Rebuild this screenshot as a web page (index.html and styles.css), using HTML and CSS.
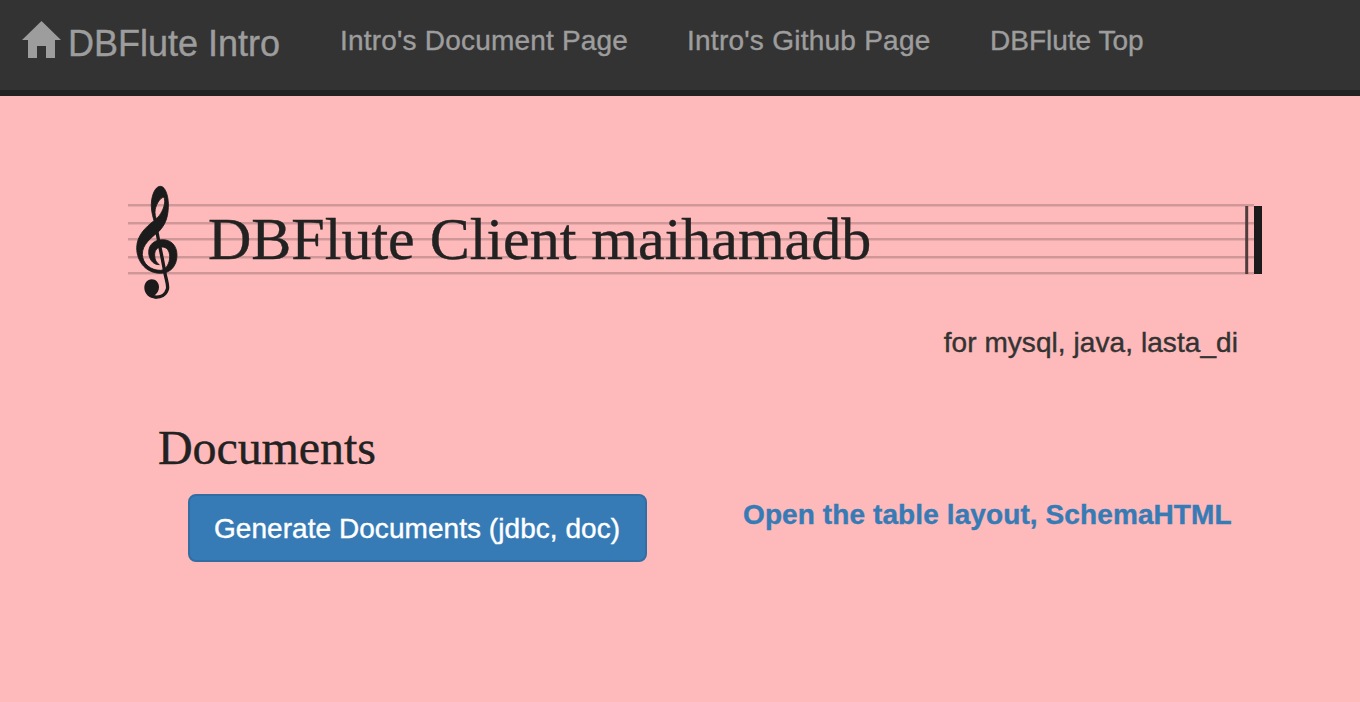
FILE: index.html
```html
<!DOCTYPE html>
<html lang="en">
<head>
<meta charset="utf-8">
<title>DBFlute Intro</title>
<link rel="stylesheet" href="styles.css">
</head>
<body>
<nav class="navbar">
  <a class="brand"><svg class="home" viewBox="0 0 39 37"><path d="M19.5 0 39 19H33V37H24V25H15V37H6V19H0Z"/></svg><span class="brand-name">DBFlute Intro</span></a>
  <a class="nav-link document">Intro's Document Page</a>
  <a class="nav-link github">Intro's Github Page</a>
  <a class="nav-link top">DBFlute Top</a>
</nav>
<main class="page">
  <header class="staff">
    <svg class="score" viewBox="0 0 1134 120">
      <path class="lines" d="M0 20.3H1126M0 38.3H1126M0 54.3H1126M0 72.3H1126M0 88.3H1126"/>
      <path class="thin-bar" d="M1118.7 21V89"/>
      <path class="thick-bar" d="M1126 21H1134V89H1126Z"/>
      <g class="clef" transform="translate(-8 -10) scale(.33333)">
        <path class="body" fill-rule="evenodd" d="M122 34C138 35 147 70 145 98C143 135 133 150 119 167C92 190 67 208 67 238C68 267 92 286 122 286C138 284 149 266 149 245C149 228 141 216 126 216C112 216 104 225 104 240C104 254 109 263 118 269C98 270 86 250 86 232C86 208 104 194 128 194C154 194 171 213 171 240C171 274 150 295 122 295C80 295 50 262 50 218C51 180 77 157 102 137C95 115 92 94 95 75C99 49 110 33 122 34ZM131 67C121 67 105 91 105 112Q105 123 109 131C121 121 133 100 134 80Q134 68 131 67Z"/>
        <path class="stem" d="M110 166C116 202 128 252 134 290C139 318 146 332 142 343C137 360 122 368 104 366"/>
        <path d="M95 313C108 313 117 323 117 337C117 348 111 356 104 361L112 370C91 373 73 358 73 339C73 324 82 313 95 313Z"/>
      </g>
    </svg>
    <h1 class="title">DBFlute Client maihamadb</h1>
  </header>
  <p class="meta">for mysql, java, lasta_di</p>
  <h2 class="subtitle">Documents</h2>
  <div class="actions">
    <button class="generate"><span class="generate-label">Generate Documents (jdbc, doc)</span></button>
    <a class="schema">Open the table layout, SchemaHTML</a>
  </div>
</main>
</body>
</html>
```
FILE: styles.css
```css
* { box-sizing: border-box; }
body { margin: 0; min-height: 702px; background: #febaba; color: #333; font: 28px/40px "Liberation Sans", Arial, sans-serif; -webkit-text-stroke: .4px; }
.navbar { display: flex; align-items: flex-start; height: 96px; padding-left: 22px; background: #333; border-bottom: 6px solid #222; color: #9d9d9d; white-space: nowrap; }
.brand { display: flex; width: 318px; padding-top: 21px; font-size: 36px; line-height: 44px; }
.brand-name { padding-top: 1px; }
.home { width: 39px; height: 37px; margin-right: 7px; fill: #9d9d9d; }
.nav-link { padding-top: 21px; }
.document { width: 347px; letter-spacing: .2px; }
.github { width: 303px; letter-spacing: .25px; }
.page { padding: 89px 98px 0 128px; }
.staff { display: grid; height: 120px; }
.score { grid-area: 1 / 1; width: 1134px; height: 120px; }
.lines { fill: none; stroke: #cf9797; stroke-width: 2.6; }
.thin-bar { fill: none; stroke: #503c3c; stroke-width: 3; }
.thick-bar, .clef { fill: #1b1b1b; }
.body { stroke: #1b1b1b; stroke-width: 2.5; }
.stem { fill: none; stroke: #1b1b1b; stroke-width: 10; }
.title { grid-area: 1 / 1; margin: 21px 0 0 80px; font: 400 60px/66px "Liberation Serif", "Times New Roman", serif; color: #222; white-space: nowrap; }
.meta { margin: 18px 24px 0 0; text-align: right; letter-spacing: .07px; }
.subtitle { margin: 60px 0 0 30px; font: 400 48px/50px "Liberation Serif", "Times New Roman", serif; letter-spacing: -.1px; color: #222; }
.actions { display: flex; align-items: flex-start; margin: 21px 0 0 60px; white-space: nowrap; }
.generate { width: 459px; height: 68px; padding: 2px 24px 0; border: 2px solid #326ea3; border-radius: 8px; background: #367bb5; color: #fff; font: inherit; letter-spacing: .05px; text-align: left; white-space: nowrap; }
.schema { margin-left: 96px; padding-top: 1px; color: #367bb5; font-weight: 700; letter-spacing: .1px; }
```
